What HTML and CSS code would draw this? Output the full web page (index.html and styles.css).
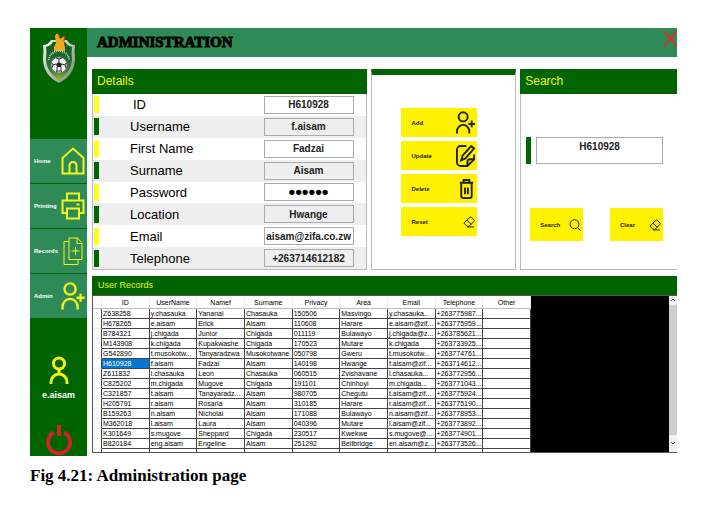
FILE: index.html
```html
<!DOCTYPE html>
<html lang="en">
<head>
<meta charset="utf-8">
<title>Administration</title>
<link rel="stylesheet" href="styles.css">
</head>
<body>
<svg class="defs" aria-hidden="true">
  <symbol id="person-add" viewBox="0 0 20 24"><circle cx="7.500" cy="6" r="4.800"/><path d="M1 23.500v-2a6.500 7 0 0 1 13 0v2M16.500 10v7M13 13.500h7"/></symbol>
  <symbol id="eraser" viewBox="0 0 24 24"><path d="M3 13 14 2.500a2 2 0 0 1 2.800 0l5 5.500a2 2 0 0 1 0 2.800L12.500 20.500H8l-5-5a1.800 1.800 0 0 1 0-2.500zM8 8.500l8.500 8M8 22h14"/></symbol>
</svg>
<main class="page">
  <div class="app">
    <aside class="sidebar">
      <svg class="crest" viewBox="0 0 34 52" role="img" aria-label="Crest">
        <defs><linearGradient id="rim" x1="0" x2="1" y1="0" y2="1"><stop offset="0" stop-color="#f1f3ee"/><stop offset=".5" stop-color="#b9c3b6"/><stop offset="1" stop-color="#6f806b"/></linearGradient>
        <linearGradient id="field" x1="0" x2="0" y1="0" y2="1"><stop offset="0" stop-color="#0b5a1c"/><stop offset=".7" stop-color="#2b7438"/><stop offset="1" stop-color="#8cba36"/></linearGradient></defs>
        <path d="M1 13q5 0 8-5h16q3 5 8 5-1 6 0 13c0 12-6 20-16 25C7 46 1 38 1 26q1-7 0-13z" fill="url(#rim)"/>
        <path d="M4 15q5-1 7-5h12q2 4 7 5-1 6 0 11c0 10-5 17-13 22C9 43 4 36 4 26q1-6 0-11z" fill="url(#field)"/>
        <path d="M13 4q1-3 3-2l2 5 5-3-1 8 1 3v4H12v-4l2-4z" fill="#efa91d"/>
        <path d="M15 1l3 3-1 2M20 5l3-1-1 5" fill="none" stroke="#cf2e22" stroke-width="1"/>
        <path d="M7 28a10 9 0 0 1 20 0" fill="none" stroke="#c6d5c5" stroke-width="2" stroke-dasharray="1 1"/>
        <circle cx="17" cy="33" r="8" fill="#f4f4f4" stroke="#777" stroke-width="1"/>
        <path d="M17 30l3 2-1 3h-4l-1-3z" fill="#222" stroke="none"/>
        <path d="M14 26l3 1 3-1M10 31l1 2-1 3M24 31l-1 2 1 3M14 40l1-1h4l1 1M17 27v3M20 32l3 1M14 32l-3 1M15 35v4M19 35v4" fill="none" stroke="#333" stroke-width="1"/>
      </svg>
      <nav class="nav">
        <a href="#home"><span>Home</span><svg viewBox="0 0 24 28"><path d="M1.500 11 12 1.500 22.500 11v15.500h-21zM8.500 26v-7.500a3.500 3.500 0 0 1 7 0V26"/></svg></a>
        <a href="#printing"><span>Printing</span><svg viewBox="0 0 24 28"><path d="M6 8.500V1.500h12v7M6 21H1.500V8.500h21V21H18M6 16.500h12v10H6zM15.500 12.500h3"/></svg></a>
        <a href="#records"><span>Records</span><svg class="thin" viewBox="0 0 24 28"><path d="M8 1h8.500L21 6v16.500H8zM16 1v5.500h5M8 4.500H3v23h14v-5M14.500 10v8M10.500 14h8"/></svg></a>
        <a href="#admin"><span>Admin</span><svg viewBox="0 0 24 28"><use href="#person-add" width="24" height="28"/></svg></a>
      </nav>
      <div class="account">
        <svg class="avatar" viewBox="0 0 20 30"><circle cx="10" cy="7.500" r="5.500"/><path d="M2 28v-2a8 8 0 0 1 16 0v2M10 13v5"/></svg>
        <span>e.aisam</span>
      </div>
      <button class="power" type="button" aria-label="Log out"><svg viewBox="0 0 26 31"><path d="M8 7.500a11 11 0 1 0 10 0M13 0v11"/></svg></button>
    </aside>
    <div class="content">
      <header class="topbar"><h1>ADMINISTRATION</h1><button class="close" type="button" aria-label="Close"><svg viewBox="0 0 14 17"><path d="M1 1l13 15M14 1 1 16"/></svg></button></header>
      <div class="panels">
        <section class="panel details">
          <h2>Details</h2>
          <form class="fields">
            <div class="field"><label for="id">ID</label><input id="id" value="H610928"></div>
            <div class="field"><label for="username">Username</label><input id="username" value="f.aisam"></div>
            <div class="field"><label for="first">First Name</label><input id="first" value="Fadzai"></div>
            <div class="field"><label for="surname">Surname</label><input id="surname" value="Aisam"></div>
            <div class="field"><label for="password">Password</label><input id="password" type="password" value="aaaaaa"></div>
            <div class="field"><label for="location">Location</label><input id="location" value="Hwange"></div>
            <div class="field"><label for="email">Email</label><input id="email" value="aisam@zifa.co.zw"></div>
            <div class="field"><label for="phone">Telephone</label><input id="phone" value="+263714612182"></div>
          </form>
        </section>
        <section class="panel actions">
          <button type="button"><span>Add</span><svg viewBox="0 0 20 24"><use href="#person-add"/></svg></button>
          <button type="button"><span>Update</span><svg viewBox="0 0 20 24"><path d="M11 2H5a4 4 0 0 0-4 4v13a4 4 0 0 0 4 4h7l7-7v-5M12 22v-3a3 3 0 0 1 3-3h4M5.500 17l1.500-5L16 2l3 2.500L10 15z"/></svg></button>
          <button type="button"><span>Delete</span><svg viewBox="0 0 20 24"><path d="M4 6h14M8 6V3h6v3M5.500 6v14a2 2 0 0 0 2 2h7a2 2 0 0 0 2-2V6M9.500 11v7M12.500 11v7"/></svg></button>
          <button type="button"><span>Reset</span><svg class="small" viewBox="0 0 24 24"><use href="#eraser"/></svg></button>
        </section>
        <section class="panel search">
          <h2>Search</h2>
          <form class="search-form">
            <div class="query"><input aria-label="Search by ID" value="H610928"></div>
            <div class="search-actions">
              <button type="button"><span>Search</span><svg class="small" viewBox="0 0 24 24"><circle cx="11" cy="10.500" r="9"/><path d="M17 17l6 6"/></svg></button>
              <button type="button"><span>Clear</span><svg class="small" viewBox="0 0 24 24"><use href="#eraser"/></svg></button>
            </div>
          </form>
        </section>
      </div>
      <section class="records">
        <h2>User Records</h2>
        <div class="grid-view">
          <table>
            <thead><tr><th class="handle"></th><th>ID</th><th>UserName</th><th>Namef</th><th>Surname</th><th>Privacy</th><th>Area</th><th>Email</th><th>Telephone</th><th>Other</th></tr></thead>
            <tbody>
              <tr><td></td><td>Z638258</td><td>y.chasauka</td><td>Yananai</td><td>Chasauka</td><td>150506</td><td>Masvingo</td><td>y.chasauka...</td><td>+263775987...</td><td></td></tr>
              <tr><td></td><td>H678265</td><td>e.aisam</td><td>Erick</td><td>Aisam</td><td>110608</td><td>Harare</td><td>e.aisam@zif...</td><td>+263775959...</td><td></td></tr>
              <tr><td></td><td>B784321</td><td>j.chigada</td><td>Junior</td><td>Chigada</td><td>011119</td><td>Bulawayo</td><td>j.chigada@z...</td><td>+263785621...</td><td></td></tr>
              <tr><td></td><td>M143908</td><td>k.chigada</td><td>Kupakwashe</td><td>Chigada</td><td>170523</td><td>Mutare</td><td>k.chigada</td><td>+263733925...</td><td></td></tr>
              <tr><td></td><td>G542890</td><td>t.musokotw...</td><td>Tanyaradzwa</td><td>Musokotwane</td><td>050798</td><td>Gweru</td><td>t.musokotw...</td><td>+263774761...</td><td></td></tr>
              <tr><td></td><td class="selected">H610928</td><td>f.aisam</td><td>Fadzai</td><td>Aisam</td><td>140198</td><td>Hwange</td><td>f.aisam@zif...</td><td>+263714612...</td><td></td></tr>
              <tr><td></td><td>Z611832</td><td>l.chasauka</td><td>Leon</td><td>Chasauka</td><td>060515</td><td>Zvishavane</td><td>l.chasauka...</td><td>+263772956...</td><td></td></tr>
              <tr><td></td><td>C825202</td><td>m.chigada</td><td>Mugove</td><td>Chigada</td><td>191101</td><td>Chinhoyi</td><td>m.chigada...</td><td>+263771043...</td><td></td></tr>
              <tr><td></td><td>C321857</td><td>t.aisam</td><td>Tanayaradz...</td><td>Aisam</td><td>980705</td><td>Chegutu</td><td>t.aisam@zif...</td><td>+263775924...</td><td></td></tr>
              <tr><td></td><td>H205791</td><td>r.aisam</td><td>Rosaria</td><td>Aisam</td><td>310185</td><td>Harare</td><td>r.aisam@zif...</td><td>+263775190...</td><td></td></tr>
              <tr><td></td><td>B159263</td><td>n.aisam</td><td>Nicholai</td><td>Aisam</td><td>171088</td><td>Bulawayo</td><td>n.aisam@zif...</td><td>+263778953...</td><td></td></tr>
              <tr><td></td><td>M362018</td><td>l.aisam</td><td>Laura</td><td>Aisam</td><td>040396</td><td>Mutare</td><td>l.aisam@zif...</td><td>+263773892...</td><td></td></tr>
              <tr><td></td><td>K301649</td><td>s.mugove</td><td>Sheppard</td><td>Chigada</td><td>230517</td><td>Kwekwe</td><td>s.mugove@...</td><td>+263774901...</td><td></td></tr>
              <tr><td></td><td>B820184</td><td>eng.aisam</td><td>Engeline</td><td>Aisam</td><td>251292</td><td>Beitbridge</td><td>en.aisam@z...</td><td>+263773526...</td><td></td></tr>
              <tr class="partial"><td></td><td></td><td></td><td></td><td></td><td></td><td></td><td></td><td></td><td></td></tr>
            </tbody>
          </table>
          <div class="scrollbar" aria-hidden="true"><svg viewBox="0 0 8 9"><path d="M2 5l2-2 2 2"/></svg><div class="thumb"></div><svg viewBox="0 0 8 9"><path d="M2 3l2 2 2-2"/></svg></div>
        </div>
      </section>
    </div>
  </div>
  <p class="caption">Fig 4.21: Administration page</p>
</main>
</body>
</html>
```
FILE: styles.css
```css
* { box-sizing: border-box; }

body {
  margin: 0;
  background: #fff;
  color: #000;
  font-family: "Liberation Sans", Arial, sans-serif;
}

h1, h2, p { margin: 0; font-weight: normal; }
button, input { font: inherit; color: inherit; border: 0; padding: 0; margin: 0; }
svg { display: block; flex: none; fill: none; stroke: currentColor; stroke-width: 2; }
.defs { position: absolute; width: 0; height: 0; }

.page { padding: 28px 43px 16px 30px; }
.app { display: grid; grid-template-columns: 57px minmax(0, 1fr); }

/* Sidebar */
.sidebar {
  display: flex;
  flex-direction: column;
  align-items: center;
  background: #006400;
  color: #fff;
}
.crest { width: 34px; height: 52px; margin-top: 4px; stroke: none; }
.nav { align-self: stretch; display: grid; gap: 1px; margin-top: 55px; }
.nav a {
  display: flex;
  align-items: center;
  justify-content: space-between;
  height: 44px;
  padding: 0 2px 0 4px;
  background: #2e8b57;
  color: #fff;
  font-size: 6px;
  font-weight: bold;
  text-decoration: none;
}
.nav svg { width: 24px; height: 28px; color: #f2f51b; }
.nav .thin { stroke-width: 1; }
.account {
  display: flex;
  flex-direction: column;
  align-items: center;
  gap: 4px;
  margin-top: 38px;
  font-size: 9px;
  font-weight: bold;
  line-height: 10px;
}
.avatar { width: 20px; height: 30px; color: #f7f50c; stroke-width: 3; }
.power {
  width: 26px;
  height: 31px;
  margin-top: auto;
  background: none;
  color: #c9262b;
}
.power svg { width: 26px; height: 31px; stroke-width: 4; }

/* Top bar */
.topbar {
  display: flex;
  align-items: center;
  justify-content: space-between;
  height: 29px;
  padding-left: 10px;
  background: #2e8b57;
}
.topbar h1 {
  font-family: "Liberation Serif", "Times New Roman", serif;
  font-size: 15px;
  font-weight: bold;
  -webkit-text-stroke: 1px #000;
}
.close { align-self: start; margin-top: 2px; background: none; color: #d5332b; }
.close svg { width: 14px; height: 17px; }

/* Panels */
.panels {
  display: grid;
  grid-template-columns: 275fr 146fr 157fr;
  gap: 4px;
  height: 201px;
  margin: 12px 0 6px 5px;
}
.panel { display: flex; flex-direction: column; min-width: 0; border: 1px solid #bbb; border-top: 0; }
.panel h2 {
  height: 25px;
  margin: 0 -1px;
  padding-left: 5px;
  background: #006400;
  color: #f4f916;
  font-size: 12px;
  line-height: 25px;
}

.fields { flex: 1; display: grid; grid-template-rows: repeat(8, 1fr); }
.field {
  display: flex;
  align-items: center;
  padding: 0 12px 0 1px;
}
.field::before { content: ""; width: 5px; height: 17px; background: #ffff19; }
.field:nth-child(even) { background: #efefef; }
.field:nth-child(even)::before { background: #006400; }
.field label { flex: 1; padding-left: 31px; font-size: 13px; }
.field:first-child label { padding-left: 34px; }
.field input {
  width: 90px;
  height: 18px;
  border: 1px solid #aaa;
  background: #fff;
  font-size: 10px;
  font-weight: bold;
  color: #222;
  text-align: center;
}
.field:nth-child(even) input { background: #efefef; }
.field input[type="password"] { font-size: 19px; color: #000; }

.actions { justify-content: center; gap: 4px; padding: 0 38px 0 29px; border-top: 6px solid #006400; }
.actions button, .search-actions button {
  display: flex;
  align-items: center;
  justify-content: space-between;
  background: #fff200;
  color: #222;
  font-size: 6px;
  font-weight: bold;
}
.actions button { height: 29px; padding: 0 2px 0 11px; }
.actions svg { width: 19px; height: 23px; }
.actions .small, .search-actions .small { width: 12px; height: 14px; }

.search { border-right: 0; }
.search h2 { margin-right: 0; }
.search-form { padding: 43px 14px 0 5px; }
.query { display: flex; gap: 5px; height: 27px; }
.query::before { content: ""; width: 5px; background: #006400; }
.query input {
  flex: 1;
  min-width: 0;
  padding-bottom: 9px;
  border: 1px solid #aaa;
  font-size: 10px;
  font-weight: bold;
  color: #222;
  text-align: center;
}
.search-actions { display: flex; justify-content: space-between; margin: 44px 0 0 4px; }
.search-actions button { width: 53px; height: 33px; padding: 0 2px 0 10px; }

/* Records */
.records { margin: 0 0 3px 5px; }
.records h2 {
  padding-left: 6px;
  background: #006400;
  color: #e9f51a;
  font-size: 9px;
  line-height: 19px;
}
.grid-view {
  display: flex;
  justify-content: space-between;
  border: 1px solid #555;
  border-right: 0;
  background: #000;
}
table {
  width: 75%;
  table-layout: fixed;
  border-collapse: separate;
  border-spacing: 0;
  background: #fff;
  font-size: 7px;
  line-height: 9px;
}
th { height: 13px; padding: 0; font-weight: normal; border-bottom: 1px solid #bbb; border-right: 1px solid #eee; }
.handle { width: 9px; }
td {
  height: 10px;
  padding: 0 0 0 1px;
  border-right: 1px solid #444;
  border-bottom: 1px solid #444;
  white-space: nowrap;
}
td:first-child { border-bottom-color: #eee; }
.partial td { height: 3px; line-height: 2px; border-bottom: 0; }
.selected { background: #0078d7; color: #fff; }
.scrollbar { display: flex; flex-direction: column; width: 8px; background: #f0f0f0; color: #555; }
.scrollbar svg { width: 8px; height: 9px; stroke-width: 1; }
.scrollbar svg:last-child { margin: 4px 0; }
.thumb { flex: 1; background: #cdcdcd; }

.caption {
  margin-top: 10px;
  font-family: "Liberation Serif", "Times New Roman", serif;
  font-size: 17px;
  font-weight: bold;
  line-height: 20px;
}
```
